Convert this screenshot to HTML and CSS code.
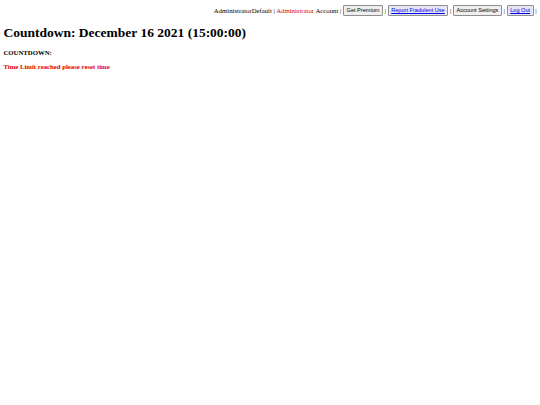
FILE: index.html
```html
<!DOCTYPE html>
<html>
<head>
<meta charset="utf-8">
<title>Countdown</title>
<link rel="stylesheet" href="styles.css">
</head>
<body>
<div class="topbar">
  AdministratorDefault | <span class="red">Administrator</span> Account |
  <button class="btn">Get Premium</button> |
  <button class="btn btn-link"><a href="#">Report Fradulent Use</a></button> |
  <button class="btn">Account Settings</button> |
  <button class="btn btn-link"><a href="#">Log Out</a></button> |
</div>
<h1 class="title">Countdown: December 16 2021 (15:00:00)</h1>
<h4 class="label">COUNTDOWN:</h4>
<p class="warn">Time Limit reached please reset time</p>
</body>
</html>
```
FILE: styles.css
```css
html, body {
  background: #ffffff;
}
body {
  margin: 3.4px;
  font-family: "Liberation Serif", "Times New Roman", serif;
  font-size: 6.75px;
  color: #000;
}
.topbar {
  text-align: right;
  line-height: 9px;
  padding-top: 2px;
}
.red {
  color: #e00000;
}
.btn {
  font-family: "Liberation Sans", Arial, sans-serif;
  font-size: 5.6px;
  padding: 1px 2.5px;
  margin: 0;
  background: #efefef;
  border: 1px solid #8f8f8f;
  border-radius: 1px;
  color: #000;
  line-height: 6.5px;
  vertical-align: 0.5px;
}
.btn-link {
  background: #e6e6f5;
}
.btn-link a {
  color: #0000ee;
  text-decoration: underline;
}
.title {
  font-size: 13.5px;
  font-weight: bold;
  margin: 9px 0 9px;
  line-height: 15px;
}
.label {
  font-size: 6.75px;
  font-weight: bold;
  margin: 0 0 7px;
}
.warn {
  font-size: 6.75px;
  font-weight: bold;
  color: #e00000;
  margin: 0;
}
```
